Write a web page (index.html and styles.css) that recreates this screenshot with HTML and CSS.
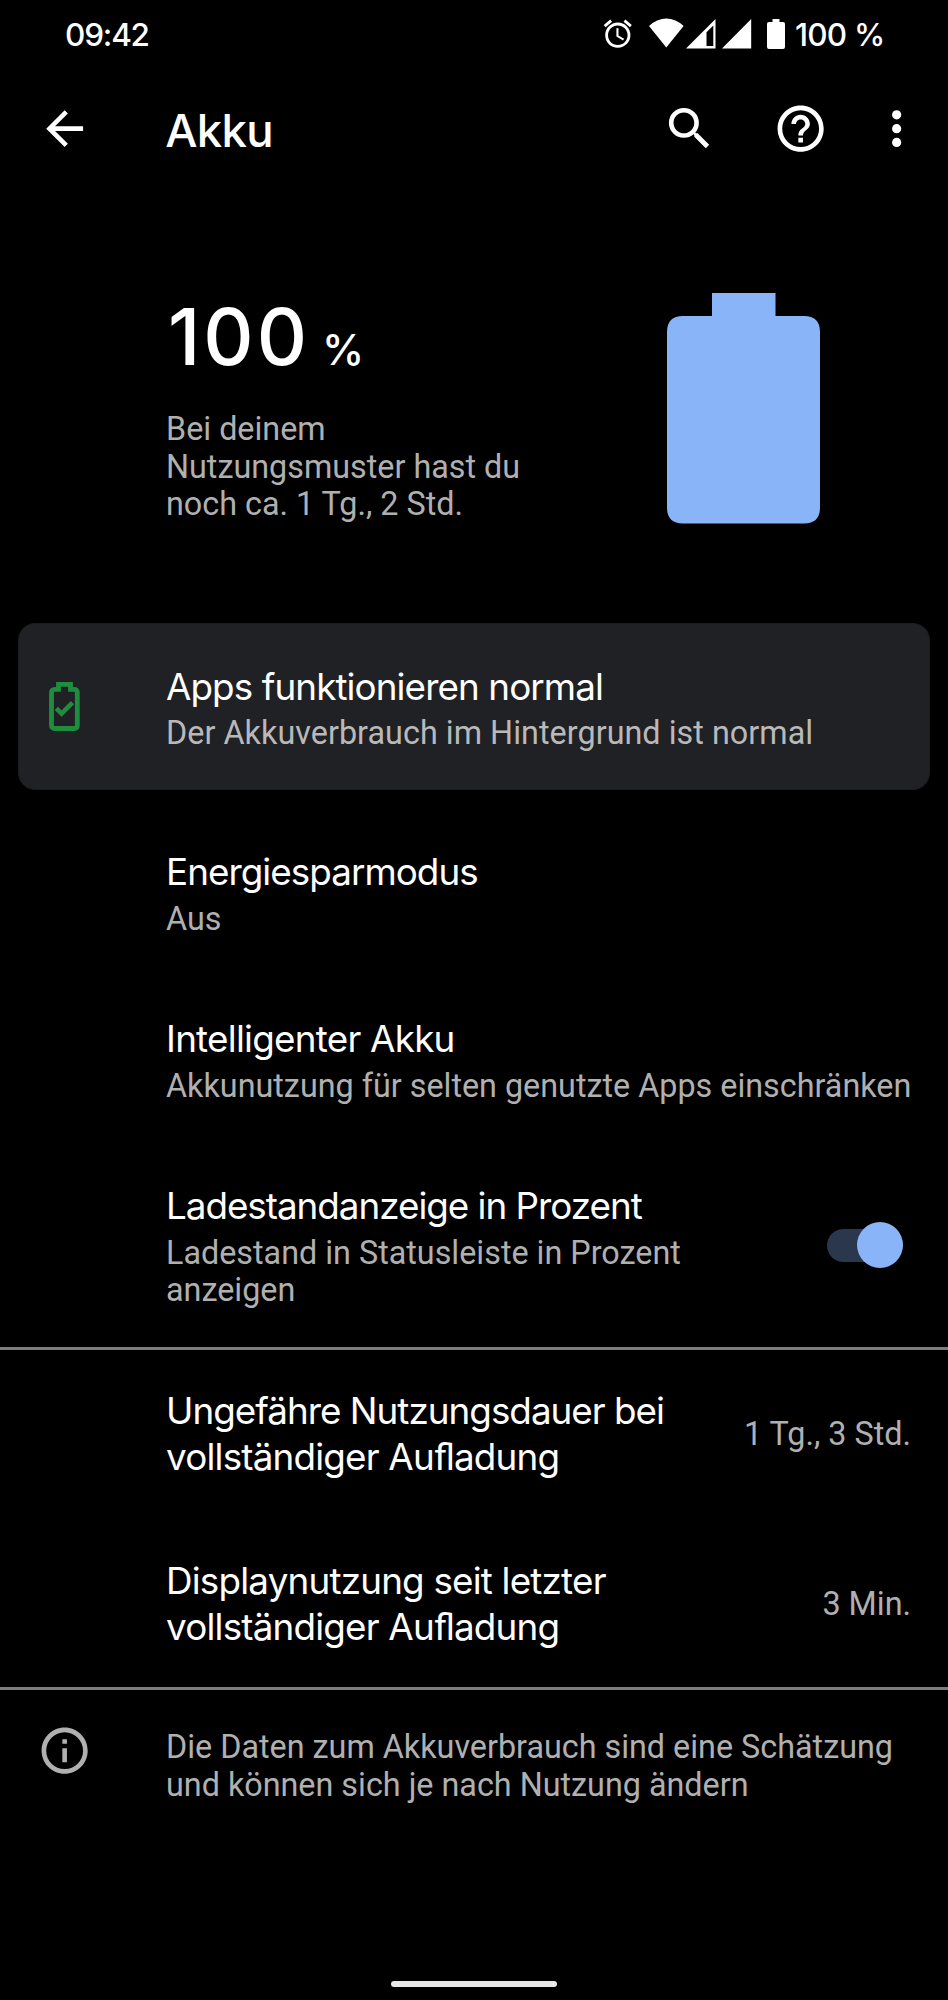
FILE: index.html
```html
<!DOCTYPE html>
<html lang="de">
<head>
<meta charset="utf-8">
<title>Akku</title>
<link rel="stylesheet" href="styles.css">
</head>
<body>
<div class="screen">
  <header class="status">
    <span class="clock">09:42</span>
    <div class="status-icons">
      <svg class="alarm" viewBox="0 0 24 24"><path d="M22 5.72l-4.6-3.86-1.29 1.53 4.6 3.86L22 5.72zM7.88 3.39L6.6 1.86 2 5.71l1.29 1.53 4.59-3.85zM12.5 8H11v6l4.75 2.85.75-1.23-4-2.37V8zM12 4c-4.97 0-9 4.03-9 9s4.02 9 9 9a9 9 0 0 0 0-18zm0 16c-3.87 0-7-3.13-7-7s3.13-7 7-7 7 3.13 7 7-3.13 7-7 7z"/></svg>
      <svg class="wifi" viewBox="0 0 35 30"><path d="M0 8Q8 .5 17.300 .5T34.600 8L17.300 29.500z"/></svg>
      <svg class="signal" viewBox="0 0 30 30"><path fill-rule="evenodd" d="M29.500 0v29.500H0zM27.300 6.500L20.500 13.300V27h6.800z"/></svg>
      <svg class="signal full" viewBox="0 0 30 30"><path d="M29.200 0v29.500H0z"/></svg>
      <svg class="cell" viewBox="0 0 18 30"><path d="M5.500 0h7v3H16q2 0 2 2v23q0 2-2 2H2q-2 0-2-2V5q0-2 2-2h3.500z"/></svg>
      <span class="percent">100 %</span>
    </div>
  </header>

  <nav class="appbar">
    <svg class="icon back" viewBox="0 0 24 24"><path d="M20 11H7.830l5.590-5.590L12 4l-8 8 8 8 1.410-1.410L7.830 13H20v-2z"/></svg>
    <h1 class="page-title">Akku</h1>
    <svg class="icon search" viewBox="0 0 24 24"><path d="M15.500 14h-.79l-.28-.27A6.470 6.470 0 0 0 16 9.500 6.500 6.500 0 1 0 9.500 16c1.610 0 3.090-.59 4.230-1.570l.27.28v.79l5 4.990L20.490 19l-4.990-5zm-6 0C7.010 14 5 11.990 5 9.500S7.010 5 9.500 5 14 7.010 14 9.500 11.990 14 9.500 14z"/></svg>
    <svg class="icon help" viewBox="0 0 24 24"><path d="M11 18h2v-2h-2v2zm1-16C6.480 2 2 6.480 2 12s4.480 10 10 10 10-4.480 10-10S17.520 2 12 2zm0 18c-4.410 0-8-3.590-8-8s3.590-8 8-8 8 3.590 8 8-3.590 8-8 8zm0-14c-2.210 0-4 1.790-4 4h2c0-1.100.9-2 2-2s2 .9 2 2c0 2-3 1.750-3 5h2c0-2.250 3-2.500 3-5 0-2.210-1.790-4-4-4z"/></svg>
    <svg class="icon more" viewBox="0 0 24 24"><circle cx="12" cy="6" r="2"/><circle cx="12" cy="12" r="2"/><circle cx="12" cy="18" r="2"/></svg>
  </nav>

  <main>
    <section class="hero">
      <div class="hero-text">
        <div class="level"><span class="level-number">100</span><span class="level-unit">%</span></div>
        <p class="sub">Bei deinem<br>Nutzungsmuster hast du<br>noch ca. 1 Tg., 2 Std.</p>
      </div>
      <svg class="battery" viewBox="0 0 153 231"><path d="M45 0h63.500v23H137q16 0 16 16v175.500q0 16-16 16H16q-16 0-16-16V39q0-16 16-16h29z"/></svg>
    </section>

    <section class="card">
      <svg class="card-icon" viewBox="0 0 31 49"><path class="outline" d="M9.500 7.400V2.400h12v5h3.500q3.300 0 3.300 3.300v32.500q0 3.300-3.300 3.300H5.800q-3.300 0-3.300-3.300V10.700q0-3.300 3.300-3.300z"/><path class="check" d="M7.300 26.400l5.300 5.200 10.900-10.900"/></svg>
      <div>
        <h2 class="title">Apps funktionieren normal</h2>
        <p class="sub">Der Akkuverbrauch im Hintergrund ist normal</p>
      </div>
    </section>

    <section class="list">
      <div class="row">
        <div>
          <h2 class="title t-saver">Energiesparmodus</h2>
          <p class="sub">Aus</p>
        </div>
      </div>
      <div class="row">
        <div>
          <h2 class="title t-smart">Intelligenter Akku</h2>
          <p class="sub">Akkunutzung für selten genutzte Apps einschränken</p>
        </div>
      </div>
      <div class="row row-switch">
        <div>
          <h2 class="title t-percent">Ladestandanzeige in Prozent</h2>
          <p class="sub">Ladestand in Statusleiste in Prozent<br>anzeigen</p>
        </div>
        <div class="switch"><div class="thumb"></div></div>
      </div>
    </section>

    <section class="list usage">
      <div class="row">
        <h2 class="title"><span class="t-runtime">Ungefähre Nutzungsdauer bei</span><br><span class="t-full">vollständiger Auﬂadung</span></h2>
        <span class="sub value">1 Tg., 3 Std.</span>
      </div>
      <div class="row">
        <h2 class="title"><span class="t-display">Displaynutzung seit letzter</span><br><span class="t-full">vollständiger Auﬂadung</span></h2>
        <span class="sub value">3 Min.</span>
      </div>
    </section>

    <footer class="note">
      <svg class="icon info" viewBox="0 0 24 24"><path d="M11 7h2v2h-2zm0 4h2v6h-2zm1-9C6.480 2 2 6.480 2 12s4.480 10 10 10 10-4.480 10-10S17.520 2 12 2zm0 18c-4.410 0-8-3.590-8-8s3.590-8 8-8 8 3.590 8 8-3.590 8-8 8z"/></svg>
      <p class="sub">Die Daten zum Akkuverbrauch sind eine Schätzung<br>und können sich je nach Nutzung ändern</p>
    </footer>
  </main>

  <div class="home-bar"></div>
</div>
</body>
</html>
```
FILE: styles.css
```css
* { box-sizing: border-box; margin: 0; padding: 0; }
body { background: #000; color: #fff; font-family: Inter, Roboto, sans-serif; }
svg { display: block; flex: none; fill: currentColor; }
.screen { width: 948px; height: 2000px; display: flex; flex-direction: column; overflow: hidden; background: #000; }
main { flex: 1; }

.status { height: 70px; padding-left: 65px; display: flex; align-items: flex-start; justify-content: space-between; font-size: 31.5px; font-weight: 500; line-height: 38px; padding-top: 16px; }
.clock { letter-spacing: -1.2px; }
.status-icons { display: flex; align-items: flex-start; padding-right: 65px; }
.alarm { width: 33.600px; height: 33.600px; margin-top: 0.5px; }
.wifi { width: 35px; height: 30px; margin: 2px 0 0 14px; }
.signal { width: 30px; height: 30px; margin: 3px 0 0 2.500px; }
.signal.full { margin-left: 5.500px; }
.cell { width: 18px; height: 30px; margin: 2.500px 0 0 15.500px; }
.percent { width: 88px; margin-left: 10px; letter-spacing: -0.8px; white-space: nowrap; }

.appbar { height: 118px; padding-left: 37px; display: flex; align-items: center; }
.icon { width: 55.300px; height: 55.300px; }
.page-title { width: 496.500px; margin: 4px 0 0 73px; font-size: 45.500px; font-weight: 500; line-height: 56px; letter-spacing: -0.7px; }
.help { margin-left: 56px; }
.more { margin-left: 41px; }

.hero { height: 435px; padding: 104.500px 128px 0 166px; display: flex; justify-content: space-between; }
.level { height: 118px; display: flex; align-items: baseline; font-weight: 500; line-height: 87px; }
.level-number { width: 156px; padding-left: 2px; font-size: 78px; letter-spacing: 3px; }
.level-unit { font-size: 42.500px; }
.battery { width: 153px; height: 231px; color: #8ab4f8; }
.hero .sub { margin-top: 0.500px; line-height: 37.500px; }

.sub { color: #b0b0b0; font-family: Roboto, sans-serif; font-size: 32.320px; font-weight: 400; line-height: 37.700px; white-space: nowrap; }
.title { font-size: 36.800px; font-weight: 400; line-height: 46px; letter-spacing: -0.9px; white-space: nowrap; }
.title + .sub { margin-top: 6px; }
.t-saver { letter-spacing: -0.950px; }
.t-smart { letter-spacing: -0.750px; }
.t-percent { letter-spacing: -1.020px; }
.t-runtime { letter-spacing: -0.980px; }
.t-full { letter-spacing: -0.800px; }
.t-display { letter-spacing: -0.800px; }

.card { width: 912px; height: 167px; margin-left: 18px; padding: 40px 0 0 30px; display: flex; border-radius: 17px; border: 1px solid #1b1c1f; background: #202124; }
.card-icon { width: 31px; height: 49px; margin: 18px 86px 0 0; }
.card .title + .sub { margin-top: 5px; color: #b9b9ba; letter-spacing: 0.040px; }
.outline { fill: none; stroke: #1e8e3e; stroke-width: 4.800; }
.check { fill: none; stroke: #1e8e3e; stroke-width: 4.600; }

.list { padding-top: 17.500px; border-bottom: 3px solid #7c7c7c; }
.row { height: 167px; padding: 41px 37px 0 166px; display: flex; justify-content: space-between; }
.row-switch { height: 205.500px; padding-right: 45px; }
.switch { width: 76px; height: 33px; margin-top: 46px; display: flex; align-items: center; justify-content: flex-end; border-radius: 17px; background: #2b374d; }
.thumb { width: 46px; height: 46px; flex: none; border-radius: 50%; background: #8ab4f8; }

.usage { padding-top: 0; }
.usage .row { height: 169.500px; padding-top: 38px; }
.usage .row + .row { height: 167px; }
.usage .row .value { margin-top: 28px; }

.note { display: flex; padding: 33.500px 0 0 37px; color: #b0b0b0; }
.note .sub { margin: 6px 0 0 73.700px; }

.home-bar { width: 166px; height: 6px; margin: 0 0 13.500px 391px; border-radius: 3px; background: #e8e8e8; }
```
